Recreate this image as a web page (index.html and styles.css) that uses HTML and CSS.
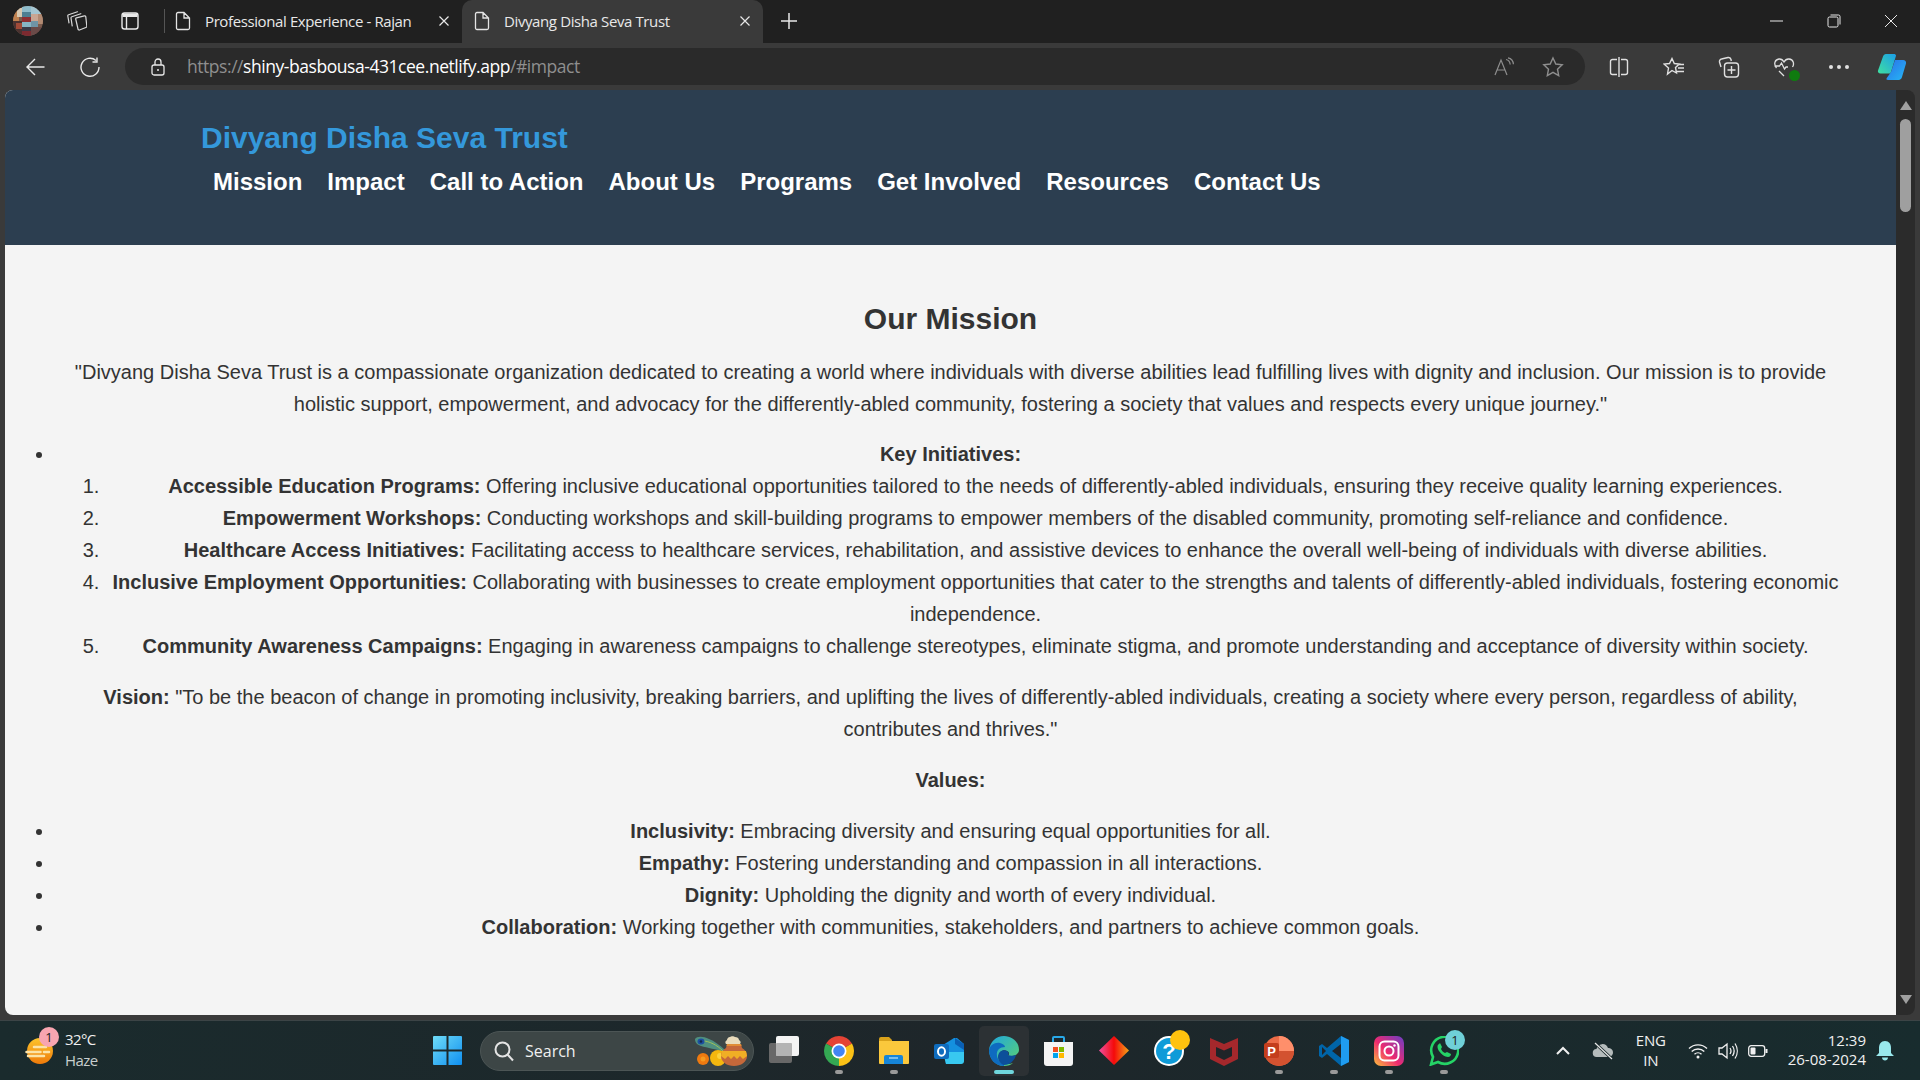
FILE: index.html
```html
<!DOCTYPE html>
<html lang="en">
  <head>
    <meta charset="UTF-8" />
    <title>Divyang Disha Seva Trust</title>
    <link rel="stylesheet" href="styles.css">
  </head>
  <body>
    <div class="tabstrip">
      <svg class="avatar" width="30" height="30" viewBox="0 0 30 30">
        <defs><clipPath id="round"><circle cx="15" cy="15" r="15"/></clipPath></defs>
        <g clip-path="url(#round)">
          <rect width="30" height="30" fill="#7a5a4c"/>
          <rect x="0" y="5" width="6" height="10" fill="#c0814f"/>
          <rect x="4" y="2" width="6" height="9" fill="#d8c8b0"/>
          <rect x="0" y="15" width="9" height="15" fill="#4a3230"/>
          <rect x="3" y="17" width="6" height="6" fill="#a04a38"/>
          <rect x="9" y="0" width="9" height="6" fill="#8fbccb"/>
          <rect x="9" y="6" width="9" height="5" fill="#4f7f92"/>
          <rect x="9" y="11" width="9" height="5" fill="#8e2f33"/>
          <rect x="9" y="16" width="9" height="5" fill="#86b5c6"/>
          <rect x="9" y="21" width="9" height="4" fill="#3a3a48"/>
          <rect x="9" y="25" width="9" height="5" fill="#7d2a30"/>
          <rect x="18" y="0" width="12" height="8" fill="#a4c6d2"/>
          <rect x="18" y="8" width="7" height="7" fill="#c9a693"/>
          <rect x="25" y="8" width="5" height="10" fill="#b28a72"/>
          <rect x="18" y="15" width="7" height="6" fill="#6f94a6"/>
          <rect x="18" y="21" width="12" height="9" fill="#6a4a48"/>
        </g>
      </svg>
      <svg class="collections" width="20" height="20" viewBox="0 0 20 20" fill="none" stroke="#d8d8d8" stroke-width="1.200" stroke-linejoin="round" stroke-linecap="round"><path d="M9.500 6.800l7.800-1.900c.8-.2 1.400.3 1.500 1l1 9c.1.800-.3 1.400-1 1.600L12.500 19c-.8.200-1.300-.2-1.500-1L8.700 8c-.1-.6.200-1 .8-1.200z"/><path d="M5.200 14.800L4 7c-.1-.6.200-1.100.8-1.300l9-3"/><path d="M2 11.800L.8 5c-.1-.6.200-1.100.8-1.300L10.500.8"/></svg>
      <svg class="tabsicon" width="20" height="20" viewBox="0 0 20 20" fill="none" stroke="#e8e8e8" stroke-width="1.400"><rect x="2" y="2" width="16" height="16" rx="2.500"/><path d="M6.500 6v12"/><path d="M2.500 2.500h15v3.500h-15z" fill="#e8e8e8" stroke="none"/></svg>
      <div class="tab-sep"></div>
      <div class="tab">
        <svg class="file" width="16" height="20" viewBox="0 0 16 20" fill="none" stroke="#e4e4e4" stroke-width="1.300"><path d="M1.500 3a1.500 1.500 0 0 1 1.500-1.500H9L14.500 7v10A1.500 1.500 0 0 1 13 18.500H3A1.500 1.500 0 0 1 1.500 17zM9 1.500V7h5.500"/></svg>
        <span class="tab-title">Professional Experience - Rajan</span>
        <svg class="tab-x" width="12" height="12" viewBox="0 0 12 12" stroke="#e8e8e8" stroke-width="1.200"><path d="M1.500 1.500l9 9M10.500 1.500l-9 9"/></svg>
      </div>
      <div class="tab active">
        <svg class="file" width="16" height="20" viewBox="0 0 16 20" fill="none" stroke="#e4e4e4" stroke-width="1.300"><path d="M1.500 3a1.500 1.500 0 0 1 1.500-1.500H9L14.500 7v10A1.500 1.500 0 0 1 13 18.500H3A1.500 1.500 0 0 1 1.500 17zM9 1.500V7h5.500"/></svg>
        <span class="tab-title">Divyang Disha Seva Trust</span>
        <svg class="tab-x" width="12" height="12" viewBox="0 0 12 12" stroke="#e8e8e8" stroke-width="1.200"><path d="M1.500 1.500l9 9M10.500 1.500l-9 9"/></svg>
      </div>
      <svg class="new-tab" width="18" height="18" viewBox="0 0 18 18" stroke="#e8e8e8" stroke-width="1.500"><path d="M9 1v16M1 9h16"/></svg>
      <div class="win-controls">
        <svg width="14" height="14" viewBox="0 0 14 14" stroke="#e8e8e8" stroke-width="1"><path d="M0 7h13"/></svg>
        <svg width="14" height="14" viewBox="0 0 14 14" fill="none" stroke="#e8e8e8" stroke-width="1"><rect x="1" y="3" width="10" height="10" rx="1.500"/><path d="M3.500 1h8a1.500 1.500 0 0 1 1.500 1.500v8"/></svg>
        <svg width="14" height="14" viewBox="0 0 14 14" stroke="#e8e8e8" stroke-width="1"><path d="M1 1l12 12M13 1L1 13"/></svg>
      </div>
    </div>

    <div class="toolbar">
      <svg class="back" width="20" height="20" viewBox="0 0 20 20" fill="none" stroke="#e8e8e8" stroke-width="1.400"><path d="M19.500 10H1.500M10 2l-8 8 8 8"/></svg>
      <svg class="reload" width="20" height="20" viewBox="0 0 20 20" fill="none" stroke="#e8e8e8" stroke-width="1.400"><path d="M16 3.500A9 9 0 1 0 19 10M17 0.500v4.500h-4.500"/></svg>
      <div class="urlbar">
        <svg class="lock" width="14" height="18" viewBox="0 0 14 18" fill="none" stroke="#e8e8e8" stroke-width="1.300"><rect x="1" y="7" width="12" height="10" rx="2"/><path d="M4 7V4a3 3 0 0 1 6 0v3"/><circle cx="7" cy="12" r="1" fill="#e8e8e8" stroke="none"/></svg>
        <span class="url"><span class="dim">https://</span>shiny-basbousa-431cee.netlify.app<span class="dim">/#impact</span></span>
        <svg class="url-action" width="20" height="20" viewBox="0 0 20 20" fill="none" stroke="#8e8e8e" stroke-width="1.200"><path d="M1 18L7 3l6 15M3.200 13h7.600M12 2.500c2.500.5 4 2.500 4.200 5M14 .8c3 .6 5.200 3.200 5.400 6.400"/></svg>
        <svg class="url-action star" width="22" height="22" viewBox="0 0 22 22" fill="none" stroke="#8e8e8e" stroke-width="1.400"><path d="M11 2l2.800 6 6.400.8-4.700 4.400 1.200 6.400L11 16.400l-5.700 3.200 1.200-6.400L1.800 8.800 8.200 8z"/></svg>
      </div>
      <div class="tools">
        <span class="tool"><svg width="20" height="20" viewBox="0 0 20 20" fill="none" stroke="#e0e0e0" stroke-width="1.400"><path d="M8 2.500H3.500a2 2 0 0 0-2 2v11a2 2 0 0 0 2 2H8M12 2.500h4.500a2 2 0 0 1 2 2v11a2 2 0 0 1-2 2H12M10 0v20"/></svg></span>
        <span class="tool"><svg width="22" height="20" viewBox="0 0 22 20" fill="none" stroke="#e0e0e0" stroke-width="1.400"><path d="M9 1.500l2.300 5 5 .5-3.800 3.500 1 5.500L9 13.500l-4.500 3.500 1-6L1 7l5.500-.5zM15 7.500h6M15 11h6M13 14.500h8"/></svg></span>
        <span class="tool"><svg width="22" height="22" viewBox="0 0 22 22" fill="none" stroke="#e0e0e0" stroke-width="1.400"><path d="M3 11L1.500 6A2.500 2.500 0 0 1 3.500 3L10 1.500c1.500-.3 2.700.5 3 2l.3 1.500"/><rect x="6.500" y="7" width="14" height="14" rx="3"/><path d="M13.500 10v8M9.500 14h8"/></svg></span>
        <span class="tool health">
          <svg width="22" height="22" viewBox="0 0 22 22" fill="none" stroke="#e0e0e0" stroke-width="1.300"><path d="M3.500 12C.5 8.500 1.500 3.500 6 3c2.500-.2 4 1.200 5 3 1-1.800 2.500-3.200 5-3 4.500.5 5.500 5 3.500 8M1.500 10h5l2-3 3 6 1.500-2h2"/><path d="M6 15l5 5"/></svg>
          <span class="health-ok"></span>
        </span>
        <span class="tool dots"><i></i><i></i><i></i></span>
        <svg class="copilot" width="30" height="28" viewBox="0 0 30 28">
          <defs>
            <linearGradient id="cpA" x1="0" y1="1" x2="1" y2="0"><stop offset="0" stop-color="#3fe0a0"/><stop offset="1" stop-color="#1b9de8"/></linearGradient>
            <linearGradient id="cpB" x1="0" y1="0" x2="1" y2="1"><stop offset="0" stop-color="#2b6fe8"/><stop offset="1" stop-color="#25b8f5"/></linearGradient>
          </defs>
          <path d="M9 1h8c1 0 2 .6 2 1.800L14 19c-.4 1-1 1.500-2 1.500H3.500C1.500 20.500.5 19 1 17.500L6 3.500C6.500 2 7.500 1 9 1z" fill="url(#cpA)"/>
          <path d="M18 7h8c2 0 3.500 1.500 3 3.500L25 24c-.5 1.600-1.500 3-3.500 3H11c-1.500 0-2-1-1.200-2L14 19z" fill="url(#cpB)"/>
        </svg>
      </div>
    </div>

    <div class="viewport">
      <div class="page">
        <header class="site-header">
          <h1>Divyang Disha Seva Trust</h1>
          <nav>
            <a href="#mission">Mission</a>
            <a href="#impact">Impact</a>
            <a href="#cta">Call to Action</a>
            <a href="#about">About Us</a>
            <a href="#programs">Programs</a>
            <a href="#involved">Get Involved</a>
            <a href="#resources">Resources</a>
            <a href="#contact">Contact Us</a>
          </nav>
        </header>
        <section class="mission">
          <h2>Our Mission</h2>
          <p class="lead">"Divyang Disha Seva Trust is a compassionate organization dedicated to creating a world where individuals with diverse abilities lead fulfilling lives with dignity and inclusion. Our mission is to provide holistic support, empowerment, and advocacy for the differently-abled community, fostering a society that values and respects every unique journey."</p>
          <ul class="initiatives">
            <li>
              <strong>Key Initiatives:</strong>
              <ol>
                <li><strong>Accessible Education Programs:</strong> Offering inclusive educational opportunities tailored to the needs of differently-abled individuals, ensuring they receive quality learning experiences.</li>
                <li><strong>Empowerment Workshops:</strong> Conducting workshops and skill-building programs to empower members of the disabled community, promoting self-reliance and confidence.</li>
                <li><strong>Healthcare Access Initiatives:</strong> Facilitating access to healthcare services, rehabilitation, and assistive devices to enhance the overall well-being of individuals with diverse abilities.</li>
                <li><strong>Inclusive Employment Opportunities:</strong> Collaborating with businesses to create employment opportunities that cater to the strengths and talents of differently-abled individuals, fostering economic independence.</li>
                <li><strong>Community Awareness Campaigns:</strong> Engaging in awareness campaigns to challenge stereotypes, eliminate stigma, and promote understanding and acceptance of diversity within society.</li>
              </ol>
            </li>
          </ul>
          <p><strong>Vision:</strong> "To be the beacon of change in promoting inclusivity, breaking barriers, and uplifting the lives of differently-abled individuals, creating a society where every person, regardless of ability, contributes and thrives."</p>
          <p><strong>Values:</strong></p>
          <ul>
            <li><strong>Inclusivity:</strong> Embracing diversity and ensuring equal opportunities for all.</li>
            <li><strong>Empathy:</strong> Fostering understanding and compassion in all interactions.</li>
            <li><strong>Dignity:</strong> Upholding the dignity and worth of every individual.</li>
            <li><strong>Collaboration:</strong> Working together with communities, stakeholders, and partners to achieve common goals.</li>
          </ul>
        </section>
      </div>
      <div class="scrollbar">
        <span class="arrow up"></span>
        <span class="thumb"></span>
        <span class="arrow down"></span>
      </div>
    </div>

    <div class="taskbar">
      <div class="weather">
        <span class="weather-icon">
          <svg width="28" height="26" viewBox="0 0 28 26">
            <defs><linearGradient id="sun" x1="0" y1="0" x2="0" y2="1"><stop offset="0" stop-color="#fcc52c"/><stop offset="1" stop-color="#ee7a0a"/></linearGradient></defs>
            <circle cx="15" cy="13" r="13" fill="url(#sun)"/>
            <path d="M9 9h12M1.500 14h14M19 14h5M3 18h16" stroke="#fbe3a8" stroke-width="2.500" stroke-linecap="round"/>
          </svg>
          <span class="weather-badge">1</span>
        </span>
        <span class="weather-text"><span>32°C</span><span class="haze">Haze</span></span>
      </div>
      <svg class="start" width="29" height="29" viewBox="0 0 29 29">
        <defs><linearGradient id="win" x1="0" y1="0" x2="1" y2="1"><stop offset="0" stop-color="#6fdcf8"/><stop offset="1" stop-color="#0f8ff0"/></linearGradient></defs>
        <path d="M0 1a1 1 0 0 1 1-1h12.500v13.500H0zM15.500 0H28a1 1 0 0 1 1 1v12.500H15.500zM0 15.500h13.500V29H1a1 1 0 0 1-1-1zM15.500 15.500H29V28a1 1 0 0 1-1 1H15.500z" fill="url(#win)"/>
      </svg>
      <div class="search">
        <svg width="22" height="22" viewBox="0 0 22 22" fill="none" stroke="#e4e4e4" stroke-width="2"><circle cx="9.500" cy="9.500" r="7"/><path d="M14.500 14.500L20 20.500"/></svg>
        <span>Search</span>
        <svg class="search-art" width="52" height="30" viewBox="0 0 52 30">
          <path d="M0 3C2 0 8 0 14 3c5 2 11 6 16 11l-2 2C22 13 12 12 6 10 3 9 0 7 0 3z" fill="#4f8f80"/>
          <path d="M8 5c6 0 14 4 20 10" stroke="#9ec25a" stroke-width="1" fill="none"/>
          <ellipse cx="6" cy="5.500" rx="3.500" ry="3" fill="#1c4fa0"/><circle cx="6" cy="5.500" r="1.300" fill="#12284a"/>
          <circle cx="8" cy="23" r="6" fill="#ee7a10"/><circle cx="8" cy="23" r="2.500" fill="#f59b20"/>
          <circle cx="23" cy="22" r="8" fill="#f4b70e"/><circle cx="25" cy="20" r="3" fill="#fbd23c"/>
          <path d="M35 1c-2 0-3 2-3 3-2 1-2 3-1 4h14c1-1 1-3-1-4 0-2-2-3-4-3-1-1-4-1-5 0z" fill="#e9dcbc"/>
          <path d="M32 8h14l1 4c3 2 5 4 5 8 0 6-6 10-13 10s-13-4-13-10c0-4 2-6 5-8z" fill="#c5683a"/>
          <path d="M27 15l24 0 1 5-4 3-3-3-3 3-3-3-3 3-3-3-3 3-4-3z" fill="#f0ae25"/>
          <path d="M32 8h14l.5 2h-15z" fill="#e08c35"/>
        </svg>
      </div>
      <svg class="task-view" width="30" height="27" viewBox="0 0 30 27"><rect x="0" y="7" width="23" height="20" rx="2" fill="#686868"/><rect x="7" y="0" width="23" height="20" rx="2" fill="#f4f4f4"/><rect x="7" y="7" width="16" height="13" rx="1" fill="#b4b4b4"/></svg>
      <span class="app-slot running">
        <svg width="30" height="30" viewBox="0 0 30 30"><path d="M15 15L2.010 7.500A15 15 0 0 1 27.990 7.500z" fill="#e54335"/><path d="M15 15V30A15 15 0 0 1 2.010 7.500z" fill="#34a853"/><path d="M15 15L27.990 7.500A15 15 0 0 1 15 30z" fill="#fbc116"/><circle cx="15" cy="15" r="7.500" fill="#fff"/><circle cx="15" cy="15" r="5.800" fill="#4285f4"/></svg>
      </span>
      <span class="app-slot running">
        <svg width="30" height="27" viewBox="0 0 30 27"><path d="M0 2a2 2 0 0 1 2-2h8l3 3v5H0z" fill="#d9a21b"/><path d="M0 4h30v22a1 1 0 0 1-1 1H1a1 1 0 0 1-1-1z" fill="#fbc83c"/><path d="M5 20a2 2 0 0 1 2-2h15a2 2 0 0 1 2 2v7H5z" fill="#1685d8"/><path d="M10 21h9" stroke="#9ad2f5" stroke-width="1.500"/></svg>
      </span>
      <span class="app-slot">
        <svg width="30" height="26" viewBox="0 0 30 26"><path d="M9 7l11-7h3l7 6v17l-3 3H12z" fill="#1490df"/><path d="M21 0l9 6v6l-9-6z" fill="#0a5fb4"/><path d="M9 14h21v9a3 3 0 0 1-3 3H12z" fill="#38c8f0"/><rect x="0" y="6" width="15" height="15" rx="2" fill="#0f6cbd"/><ellipse cx="7.500" cy="13.500" rx="3.500" ry="4.200" fill="none" stroke="#fff" stroke-width="2"/></svg>
      </span>
      <span class="app-slot active">
        <svg width="30" height="30" viewBox="0 0 30 30">
          <defs><linearGradient id="edgeA" x1="0" y1="0" x2="1" y2="1"><stop offset="0" stop-color="#1ea7e0"/><stop offset="1" stop-color="#5ed26c"/></linearGradient></defs>
          <path d="M15 0C7 0 1 6 0 14c0 9 7 16 15 16 4 0 7-1 9-3-7 3-14-1-14-7 0-5 5-7 8-5 3 1 2 4 1 5 4 1 11-1 11-6C30 6 23 0 15 0z" fill="url(#edgeA)"/>
          <path d="M0 14c1-5 6-8 11-7 4 1 5 3 5 4-5 0-9 3-8 9 1 4 3 7 7 8v2C6 30 0 23 0 14z" fill="#0e6bc0"/>
          <path d="M9 21c0-5 5-8 9-6 2 1 2 3 1 4 2 1 5 1 8 0-1 5-6 10-12 10-3-1-6-4-6-8z" fill="#0c4f9a"/>
        </svg>
      </span>
      <span class="app-slot">
        <svg width="29" height="30" viewBox="0 0 29 30"><path d="M9 6V2a1 1 0 0 1 1-1h9a1 1 0 0 1 1 1v4" fill="none" stroke="#28a8e8" stroke-width="2"/><path d="M0 6h29v21a3 3 0 0 1-3 3H3a3 3 0 0 1-3-3z" fill="#f4f4f4"/><rect x="9" y="11" width="5" height="5" fill="#f25022"/><rect x="15" y="11" width="5" height="5" fill="#7fba00"/><rect x="9" y="17" width="5" height="5" fill="#00a4ef"/><rect x="15" y="17" width="5" height="5" fill="#ffb900"/></svg>
      </span>
      <span class="app-slot">
        <svg width="30" height="29" viewBox="0 0 30 29"><defs><linearGradient id="gem" x1="0" y1="0" x2="1" y2="0"><stop offset="0" stop-color="#f04fa0"/><stop offset=".5" stop-color="#f50a0a"/><stop offset="1" stop-color="#f5a418"/></linearGradient></defs><path d="M15 0l15 14.500L15 29 0 14.500z" fill="url(#gem)"/></svg>
      </span>
      <span class="app-slot">
        <svg width="30" height="30" viewBox="0 0 30 30"><circle cx="15" cy="15" r="15" fill="#fff"/><circle cx="15" cy="15" r="13" fill="#0f9bd8"/><text class="help-mark" x="15" y="23" text-anchor="middle">?</text></svg>
        <span class="yellow-dot"></span>
      </span>
      <span class="app-slot">
        <svg width="28" height="30" viewBox="0 0 28 30"><path d="M0 2l14 6 14-6v21L14 30 0 23z" fill="#a5282c"/><path d="M6 11l8 3.500 8-3.500v9l-8 4-8-4z" fill="#1f2428"/></svg>
      </span>
      <span class="app-slot running">
        <svg width="30" height="30" viewBox="0 0 30 30"><circle cx="15" cy="15" r="15" fill="#ed6c47"/><path d="M15 0a15 15 0 0 1 15 15H15z" fill="#ff8f6b"/><path d="M0 15h30a15 15 0 0 1-30 0z" fill="#d35230"/><rect x="0" y="7" width="15" height="15" rx="2" fill="#c43e1c"/><text class="ppt-mark" x="7.500" y="19.500" text-anchor="middle">P</text></svg>
      </span>
      <span class="app-slot running">
        <svg width="30" height="30" viewBox="0 0 30 30"><path d="M22 0l8 4v22l-8 4L8 18l-5 4-3-2V10l3-2 5 4z" fill="#0065a9"/><path d="M22 0l8 4v22l-8 4z" fill="#1f9cf0"/><path d="M22 8l-9 7 9 7z" fill="#1f2428"/><path d="M3 11l4 4-4 4z" fill="#1f2428"/></svg>
      </span>
      <span class="app-slot running">
        <svg width="30" height="30" viewBox="0 0 30 30"><defs><linearGradient id="ig" x1="0" y1="1" x2="1" y2="0"><stop offset="0" stop-color="#fdc13b"/><stop offset=".45" stop-color="#ee2a6f"/><stop offset="1" stop-color="#6a3ec8"/></linearGradient></defs><rect width="30" height="30" rx="7" fill="url(#ig)"/><rect x="5.500" y="5.500" width="19" height="19" rx="5" fill="none" stroke="#fff" stroke-width="2"/><circle cx="15" cy="15" r="4.500" fill="none" stroke="#fff" stroke-width="2"/><circle cx="20.500" cy="9.500" r="1.200" fill="#fff"/></svg>
      </span>
      <span class="app-slot running">
        <svg width="30" height="30" viewBox="0 0 30 30" fill="none"><path d="M2 28.500l2-7.500A13.500 13.500 0 1 1 9 26z" stroke="#25d366" stroke-width="2.600"/><path d="M10 8c-2 1-2 4 0 7s6 6 9 6c2 0 3-2 3-3l-4-2-2 1c-2-1-3-2-4-4l1-2-2-4z" fill="#25d366"/></svg>
        <span class="wa-badge">1</span>
      </span>
      <div class="tray">
        <svg class="chevron" width="16" height="10" viewBox="0 0 16 10" fill="none" stroke="#f0f0f0" stroke-width="2"><path d="M2 8l6-6 6 6"/></svg>
        <svg class="cloud" width="22" height="18" viewBox="0 0 22 18"><path d="M5 15a4 4 0 0 1-.500-8A6 6 0 0 1 16 6a4.500 4.500 0 0 1 1 9z" fill="#b5bcbc"/><path d="M3 1l17 16" stroke="#1a2a2c" stroke-width="3"/><path d="M3 1l17 16" stroke="#e8e8e8" stroke-width="1.200"/></svg>
        <div class="lang"><span>ENG</span><span>IN</span></div>
        <svg class="wifi" width="20" height="16" viewBox="0 0 20 16" fill="none" stroke="#f0f0f0" stroke-width="1.400"><path d="M1 5.500a13 13 0 0 1 18 0M3.700 8.500a9 9 0 0 1 12.600 0M6.500 11.300a5 5 0 0 1 7 0"/><circle cx="10" cy="14" r="1.500" fill="#f0f0f0" stroke="none"/></svg>
        <svg class="volume" width="20" height="18" viewBox="0 0 20 18" fill="none" stroke="#f0f0f0" stroke-width="1.300"><path d="M1 6h3l5-4v14l-5-4H1zM12 6c1.200 1.800 1.200 4.200 0 6M14.500 4c2 3 2 7 0 10M17 1.500c3 4.500 3 10.500 0 15"/></svg>
        <svg class="battery" width="20" height="12" viewBox="0 0 20 12" fill="none" stroke="#f0f0f0" stroke-width="1.300"><rect x=".7" y=".7" width="16" height="10.600" rx="2.500"/><path d="M18.500 4v4" stroke-width="2"/><rect x="2.500" y="2.500" width="5" height="7" rx="1" fill="#f0f0f0" stroke="none"/></svg>
        <div class="clock"><span>12:39</span><span>26-08-2024</span></div>
        <svg class="bell" width="18" height="20" viewBox="0 0 18 20"><path d="M9 0c4 0 6 3 6 7v5l3 3H0l3-3V7c0-4 2-7 6-7z" fill="#98e8ec"/><path d="M6 16.500h6c0 4-6 4-6 0z" fill="#98e8ec"/></svg>
      </div>
    </div>
  </body>
</html>
```

FILE: styles.css
```css
* {
  box-sizing: border-box;
}
html,
body {
  margin: 0;
  height: 100%;
}
body {
  display: flex;
  flex-direction: column;
  width: 1920px;
  height: 1080px;
  overflow: hidden;
  background: #3a3a3a;
  font-family: "Liberation Sans", Arial, sans-serif;
}

/* tab strip */
.tabstrip {
  display: flex;
  align-items: center;
  height: 43px;
  flex: none;
  padding-bottom: 2px;
  background: #202020;
  color: #e8e8e8;
  font-family: "Open Sans", sans-serif;
}
.avatar {
  flex: none;
  margin-left: 13px;
}
.collections {
  flex: none;
  margin-left: 24px;
}
.tabsicon {
  flex: none;
  margin-left: 33px;
}
.tab-sep {
  width: 1px;
  height: 24px;
  margin-left: 24px;
  background: #555;
}
.tab {
  display: flex;
  align-items: center;
  align-self: flex-start;
  width: 297px;
  height: 43px;
  padding-bottom: 2px;
  padding-left: 10px;
}
.tab.active {
  width: 301px;
  padding-left: 12px;
  background: #3a3a3a;
  border-radius: 10px 10px 0 0;
}
.file {
  flex: none;
}
.tab-title {
  flex: 1;
  margin-left: 14px;
  font-size: 15px;
  letter-spacing: -0.39px;
  white-space: nowrap;
}
.tab-x {
  flex: none;
  margin-right: 12px;
}
.new-tab {
  margin-left: 17px;
}
.win-controls {
  display: flex;
  align-items: center;
  gap: 43px;
  margin-left: auto;
  margin-right: 22px;
}

/* toolbar */
.toolbar {
  display: flex;
  align-items: center;
  height: 47px;
  flex: none;
  background: #3a3a3a;
  font-family: "Open Sans", sans-serif;
}
.back {
  margin-left: 25px;
}
.reload {
  margin-left: 35px;
}
.urlbar {
  display: flex;
  align-items: center;
  width: 1460px;
  height: 37px;
  margin-left: 25px;
  padding-left: 26px;
  background: #2a2a2a;
  border-radius: 19px;
}
.url {
  flex: 1;
  margin-left: 22px;
  margin-bottom: 2px;
  color: #fff;
  font-size: 17.500px;
  letter-spacing: -0.45px;
  white-space: nowrap;
}
.dim {
  color: #8f8f8f;
}
.url-action {
  margin-right: 28px;
}
.url-action.star {
  margin-right: 21px;
}
.tools {
  display: flex;
  align-items: center;
  padding-left: 6px;
}
.tool {
  display: flex;
  justify-content: center;
  width: 55px;
}
.health {
  position: relative;
}
.health-ok {
  position: absolute;
  left: 33px;
  bottom: -3px;
  width: 11px;
  height: 11px;
  border-radius: 50%;
  background: #0f7b0f;
}
.dots {
  gap: 4px;
}
.dots i {
  width: 4px;
  height: 4px;
  border-radius: 50%;
  background: #e0e0e0;
}
.copilot {
  margin-left: 11px;
}

/* page area */
.viewport {
  display: flex;
  flex: none;
  height: 925px;
  padding-left: 5px;
}
.page {
  width: 1891px;
  height: 925px;
  overflow: hidden;
  background: #f4f4f4;
  border-radius: 8px 0 0 8px;
  color: #333;
  font-size: 20px;
  line-height: 32px;
  text-align: center;
}
.site-header {
  height: 155px;
  padding: 18px 0 0 196px;
  background: #2c3e50;
  text-align: left;
}
.site-header h1 {
  margin: 0;
  color: #3498db;
  font-size: 30px;
  line-height: 60px;
}
.site-header nav {
  display: flex;
  gap: 25px;
  padding-left: 12px;
  margin-top: -5px;
}
.site-header nav a {
  color: #fff;
  font-size: 24px;
  font-weight: bold;
  line-height: 38px;
  text-decoration: none;
}
.mission {
  padding: 50px 50px 0;
}
.mission h2 {
  margin: 0;
  font-size: 30px;
  line-height: 48px;
}
.mission p {
  margin: 19px 0;
}
.mission .lead {
  margin: 13px 0 18px;
}
.mission ul {
  margin: 19px 0;
  padding: 0;
}
.mission .initiatives {
  margin-top: 18px;
}
.mission ol {
  margin: 0;
  padding-left: 50px;
}

/* scrollbar */
.scrollbar {
  display: flex;
  flex-direction: column;
  align-items: center;
  width: 19px;
  height: 925px;
  background: #2b2b2b;
  border-radius: 0 8px 8px 0;
  padding: 11px 0;
}
.arrow {
  width: 0;
  height: 0;
  border-left: 6px solid transparent;
  border-right: 6px solid transparent;
}
.arrow.up {
  border-bottom: 9px solid #9f9f9f;
}
.arrow.down {
  margin-top: auto;
  border-top: 9px solid #9f9f9f;
}
.thumb {
  width: 11px;
  height: 93px;
  margin-top: 9px;
  border-radius: 6px;
  background: #9f9f9f;
}

/* taskbar */
.taskbar {
  display: flex;
  align-items: center;
  height: 60px;
  flex: none;
  margin-top: 5px;
  background: linear-gradient(90deg, #1a2b2d, #1e262a 50%, #182c2e);
  border-top: 1px solid #3c4446;
  color: #f0f0f0;
  font-family: "Open Sans", sans-serif;
  font-size: 14px;
}
.weather {
  display: flex;
  align-items: center;
  width: 433px;
  padding-left: 25px;
}
.weather-icon {
  position: relative;
  display: flex;
}
.weather-badge {
  position: absolute;
  top: -11px;
  left: 14px;
  width: 20px;
  height: 20px;
  border-radius: 50%;
  background: #f8a5b0;
  color: #222;
  font-size: 13px;
  line-height: 20px;
  text-align: center;
}
.weather-text {
  display: flex;
  flex-direction: column;
  margin-left: 12px;
  margin-bottom: 2px;
  font-size: 15px;
  letter-spacing: -0.6px;
  line-height: 21px;
}
.haze {
  color: #c8cfcf;
}
.start {
  flex: none;
}
.search {
  display: flex;
  align-items: center;
  width: 274px;
  height: 40px;
  margin-left: 18px;
  padding-left: 12px;
  background: #3d4646;
  border: 1px solid #4c5555;
  border-radius: 20px;
  font-size: 16px;
}
.search span {
  margin-left: 10px;
}
.search-art {
  margin-left: auto;
  margin-right: 6px;
}
.task-view {
  flex: none;
  margin: 0 12px 2px 15px;
}
.app-slot {
  position: relative;
  display: flex;
  align-items: center;
  justify-content: center;
  width: 55px;
  height: 50px;
}
.app-slot.running::after,
.app-slot.active::after {
  content: "";
  position: absolute;
  bottom: 2px;
  left: 24px;
  width: 8px;
  height: 4px;
  border-radius: 2px;
  background: #9a9a9a;
}
.app-slot.active {
  width: 50px;
  margin: 0 2.500px;
  background: #2c3134;
  border-radius: 5px;
}
.app-slot.active::after {
  left: 15px;
  width: 20px;
  background: #6fd6dc;
}
.yellow-dot {
  position: absolute;
  top: 4px;
  right: 6px;
  width: 20px;
  height: 20px;
  border-radius: 50%;
  background: #ffc20e;
}
.wa-badge {
  position: absolute;
  top: 4px;
  right: 6px;
  width: 20px;
  height: 20px;
  border-radius: 50%;
  background: #6fd0d8;
  color: #222;
  font-size: 13px;
  line-height: 20px;
  text-align: center;
}
.help-mark {
  fill: #fff;
  font: bold 22px "Liberation Sans", sans-serif;
}
.ppt-mark {
  fill: #fff;
  font: bold 13px "Liberation Sans", sans-serif;
}
.tray {
  display: flex;
  align-items: center;
  margin-left: auto;
}
.chevron {
  margin-right: 21px;
}
.lang {
  display: flex;
  flex-direction: column;
  align-items: center;
  margin-left: 22px;
  margin-bottom: 2px;
  font-size: 15px;
  letter-spacing: -0.2px;
  line-height: 20px;
}
.wifi {
  margin-left: 22px;
}
.volume {
  margin-left: 10px;
}
.battery {
  margin-left: 10px;
}
.clock {
  display: flex;
  flex-direction: column;
  align-items: flex-end;
  margin-left: 20px;
  margin-bottom: 2px;
  font-size: 15px;
  line-height: 19px;
}
.bell {
  margin: 0 26px 0 10px;
}
```
